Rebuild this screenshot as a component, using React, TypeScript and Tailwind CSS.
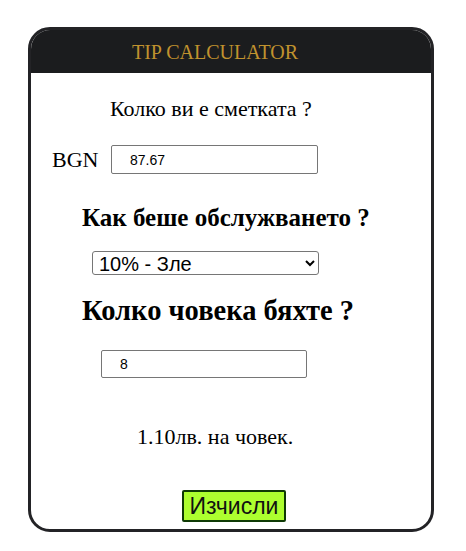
import { useState } from "react"

const serif = "font-['Liberation_Serif','Times_New_Roman',serif]"
const sans = "font-['Liberation_Sans',Arial,sans-serif]"

export default function App() {
  const [bill, setBill] = useState("87.67")
  const [service, setService] = useState("0.1")
  const [people, setPeople] = useState("8")

  return (
    <div className="min-h-[551px] w-[466px] bg-white pl-[28px] pt-[27px]">
      <div className="h-[505px] w-[406px] overflow-hidden rounded-[22px] border-[3px] border-[#232326] bg-white text-black">
        {/* header */}
        <div className="flex h-[43px] items-center justify-center bg-[#1b1c1e] pr-[32px]">
          <h1 className={`${serif} text-[20px] leading-none text-[#c0922e]`}>TIP CALCULATOR</h1>
        </div>

        <div className="flex flex-col items-start">
          <p className={`${serif} ml-[79px] mt-[24px] h-[24px] text-[22px] leading-[24px]`}>Колко ви е сметката ?</p>

          <div className="mt-[24px] flex h-[29px] items-center">
            <span className={`${serif} ml-[21px] w-[59px] text-[22px] leading-[24px]`}>BGN</span>
            <input
              value={bill}
              onChange={(e) => setBill(e.target.value)}
              className={`${sans} h-[29px] w-[207px] rounded-[2px] border border-[#767676] pl-[18px] text-[14px] text-black outline-none`}
            />
          </div>

          <h3 className={`${serif} ml-[51px] mt-[30px] h-[28px] text-[25px] font-bold leading-[28px]`}>Как беше обслужването ?</h3>

          <select
            value={service}
            onChange={(e) => setService(e.target.value)}
            className={`${sans} ml-[61px] mt-[19px] h-[24px] w-[227px] rounded-[3px] border border-[#767676] pl-[2px] text-[20px] leading-[22px] text-black outline-none`}
          >
            <option value="0.3">30% - Отлично</option>
            <option value="0.2">20% - Добре</option>
            <option value="0.15">15% - Нормално</option>
            <option value="0.1">10% - Зле</option>
            <option value="0.05">5% - Ужасно</option>
          </select>

          <h2 className={`${serif} ml-[51px] mt-[22px] h-[28px] text-[28.5px] font-bold leading-[28px]`}>Колко човека бяхте ?</h2>

          <input
            value={people}
            onChange={(e) => setPeople(e.target.value)}
            className={`${sans} ml-[70px] mt-[25px] h-[28px] w-[206px] rounded-[2px] border border-[#767676] pl-[18px] text-[14px] text-black outline-none`}
          />

          <p className={`${serif} ml-[106px] mt-[47px] h-[24px] text-[22px] leading-[24px]`}>1.10лв. на човек.</p>

          <button
            className={`${sans} ml-[151px] mt-[41px] h-[32px] w-[104px] rounded-[2px] border-2 border-[#0f3a05] bg-[#adff2f] text-[23px] leading-none text-[#111]`}
          >
            Изчисли
          </button>
        </div>
      </div>
    </div>
  )
}
